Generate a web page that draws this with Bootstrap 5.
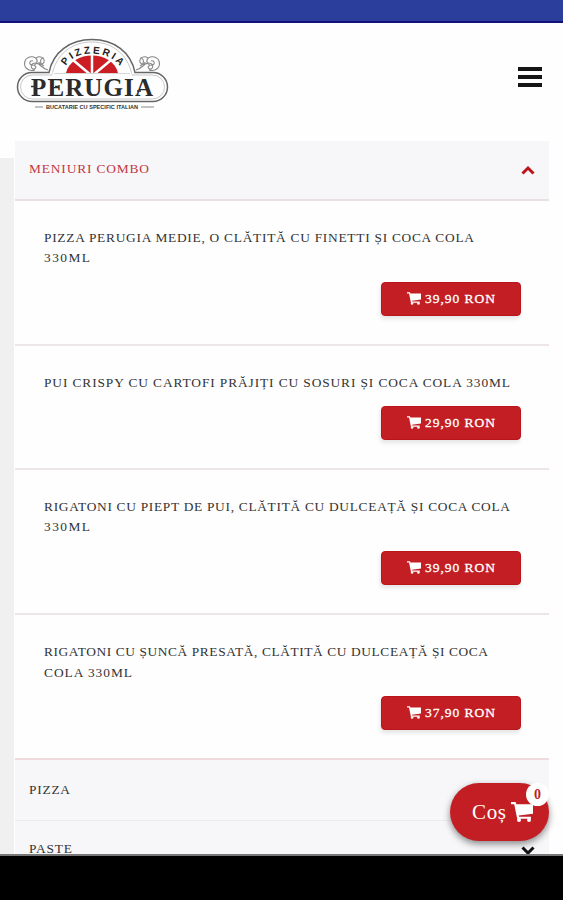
<!DOCTYPE html>
<html lang="ro">
<head>
<meta charset="utf-8">
<meta name="viewport" content="width=device-width, initial-scale=1">
<title>Pizzeria Perugia</title>
<link href="https://cdn.jsdelivr.net/npm/bootstrap@5.3.0/dist/css/bootstrap.min.css" rel="stylesheet">
<style>
body{font-family:"Liberation Serif",serif;background:#fefefe;color:#333}
.screen{height:900px}
.status{height:23px;background:#2c3e9c;border-bottom:2px solid #12127c}
.site-head{height:118px;padding:0 21px 0 15px}
.logo{width:156px;height:80px;margin-top:-15px}
.burger{width:24px;height:22px;margin-top:-11px}
.content{background:linear-gradient(#fefefe 17px,#f0f0f0 17px) 0 0/14px 100% no-repeat;padding:0 14px 0 15px}
.menu-list{background:#fefefe}
.cat{height:61px;background:#f7f7f9;border-bottom:1px solid #ececef;padding:0 14px 2px;font-size:13.4px;line-height:20px}
.cat.open{height:60px;color:#c13742;border-bottom:2px solid #ecdfe3;padding-bottom:4px}
.cat.cut{height:34px;border:0;padding:17px 14px 0}
.dish{height:145px;border-bottom:2px solid #eee5e7;padding:26px 28px 0 29px;font-size:13.4px;line-height:20.5px}
.dish.single{height:124px}
.dish.final{border-bottom-color:#efdade}
.dish>svg,.cat svg{display:block;overflow:visible}
.buy{width:140px;height:34px;margin-top:14px;background:#c21e23;color:#fff;border:1px solid #b9161b;border-radius:4px;font-size:13.5px;line-height:1;padding:0 0 1px;box-shadow:-1px 3px 4px rgba(0,0,0,.1)}
.buy:hover{background:#a9181c;color:#fff}
.cart-fab{right:14px;bottom:13px;width:99px;height:58px;background:#c21e23;color:#fff;border-radius:29px;font-size:21px;box-shadow:0 3px 7px rgba(0,0,0,.45);padding-left:6px}
.count{right:0;top:0;width:23px;height:23px;background:#fff;color:#c21e23;font-size:14px;font-weight:bold}
.sysbar{height:46px;background:#000;border-top:2px solid #777}
svg text{font-family:"Liberation Serif",serif}
svg .sans{font-family:"Liberation Sans",sans-serif}
</style>
<script src="https://cdn.jsdelivr.net/npm/bootstrap@5.3.0/dist/js/bootstrap.bundle.min.js"></script>
</head>
<body>
<svg class="d-none" aria-hidden="true">
  <symbol id="cart" viewBox="0 0 22 20"><path fill="currentColor" d="M0 0h4.600l.8 2.200H22v9.500L7.800 13.500l.3 1.300H20v2H6.200L3.200 2.200H0z"/><circle cx="8" cy="18" r="2" fill="currentColor"/><circle cx="18" cy="18" r="2" fill="currentColor"/></symbol>
</svg>
<div class="screen d-flex flex-column overflow-hidden">
  <div class="status flex-shrink-0"></div>
  <header class="site-head d-flex align-items-center justify-content-between flex-shrink-0">
    <svg class="logo" viewBox="15 35 156 80" aria-label="Pizzeria Perugia">
      <g fill="none">
        <path d="M49 72.500C53 52 70 39.500 92 39.500S131 52 135 72.500H153A14.500 14.500 0 0 1 153 101.500H32A14.500 14.500 0 0 1 32 72.500Z" stroke="#666" stroke-width="1.500"/>
        <path d="M52 75C56 54 72 42 92 42S128 54 132 75H152.500A12 12 0 0 1 152.500 99H32.500A12 12 0 0 1 32.500 75Z" stroke="#bbb" stroke-width=".8"/>
        <path d="M52.500 74H131.500" stroke="#fefefe" stroke-width="3"/>
        <g id="scroll" stroke="#888" stroke-width="1.100"><path d="M48 70c-6-1-7-6-12-7-5-.5-6 5-3 6 3 .7 4-3 1-3.500M35 70c-7 2-12-3-10-9 2-5 10-6 12-1 1 4-4 7-7 4-1-2 1-4 3-3M36 58c4-3 9 0 8 4-1 3-5 3-5 0M44 58c-4 0-5 6 0 8"/></g>
        <use href="#scroll" transform="matrix(-1 0 0 1 184 0)"/>
      </g>
      <path d="M66 73C71 49.500 113 49.500 118 73Z" fill="#cc1d25"/>
      <path d="M92 54v19M92 76L73 60M92 76L111 60" stroke="#fefefe" stroke-width="2.500"/>
      <path id="arc" d="M66 66C74 49 110 49 121 68" fill="none"/>
      <text class="sans" font-size="10" font-weight="bold" fill="#222"><textPath href="#arc" startOffset="0" textLength="62">PIZZERIA</textPath></text>
      <path d="M54 73.500h76" stroke="#ccc" stroke-width=".8"/>
      <text x="31" y="95.500" font-size="25" font-weight="bold" fill="#2b2b2b" textLength="122">PERUGIA</text>
      <path d="M31 86.500h4M55 86.500h4M76 86.500h4M137 91h4" stroke="#333" stroke-width="1.500"/>
      <text class="sans" x="46" y="109.300" font-size="5.600" font-weight="bold" fill="#333" textLength="92" lengthAdjust="spacingAndGlyphs">BUCATARIE CU SPECIFIC ITALIAN</text>
      <path d="M35 107h8M141 107h13" stroke="#888"/>
    </svg>
    <svg class="burger" viewBox="0 0 24 22" role="button" aria-label="Meniu"><path d="M0 3h24M0 11h24M0 19h24" stroke="#151515" stroke-width="4"/></svg>
  </header>
  <main class="content flex-grow-1 overflow-hidden position-relative">
    <div class="menu-list">
      <div class="cat open d-flex align-items-center justify-content-between">
        <svg width="120" height="20" fill="currentColor"><text y="14.500" textLength="120">MENIURI COMBO</text></svg>
        <svg class="mt-1" width="14" height="9" viewBox="0 0 14 9"><path d="M1.500 7.500 7 2l5.500 5.500" fill="none" stroke="#b9161b" stroke-width="3"/></svg>
      </div>
      <div class="dish">
        <svg width="431" height="41" fill="currentColor"><text y="14.500" textLength="430">PIZZA PERUGIA MEDIE, O CLĂTITĂ CU FINETTI ȘI COCA COLA</text><text y="35" textLength="46">330ML</text></svg>
        <button class="buy btn d-flex align-items-center justify-content-center gap-1 ms-auto"><svg width="14" height="13"><use href="#cart"/></svg><svg width="71" height="16" fill="currentColor"><text y="12" textLength="70" stroke="currentColor" stroke-width=".3">39,90 RON</text></svg></button>
      </div>
      <div class="dish single">
        <svg width="466" height="20" fill="currentColor"><text y="14.500" textLength="466">PUI CRISPY CU CARTOFI PRĂJIȚI CU SOSURI ȘI COCA COLA 330ML</text></svg>
        <button class="buy btn d-flex align-items-center justify-content-center gap-1 ms-auto"><svg width="14" height="13"><use href="#cart"/></svg><svg width="71" height="16" fill="currentColor"><text y="12" textLength="70" stroke="currentColor" stroke-width=".3">29,90 RON</text></svg></button>
      </div>
      <div class="dish">
        <svg width="466" height="41" fill="currentColor"><text y="14.500" textLength="466">RIGATONI CU PIEPT DE PUI, CLĂTITĂ CU DULCEAȚĂ ȘI COCA COLA</text><text y="35" textLength="46">330ML</text></svg>
        <button class="buy btn d-flex align-items-center justify-content-center gap-1 ms-auto"><svg width="14" height="13"><use href="#cart"/></svg><svg width="71" height="16" fill="currentColor"><text y="12" textLength="70" stroke="currentColor" stroke-width=".3">39,90 RON</text></svg></button>
      </div>
      <div class="dish final">
        <svg width="445" height="41" fill="currentColor"><text y="15" textLength="444">RIGATONI CU ȘUNCĂ PRESATĂ, CLĂTITĂ CU DULCEAȚĂ ȘI COCA</text><text y="35.500" textLength="88">COLA 330ML</text></svg>
        <button class="buy btn d-flex align-items-center justify-content-center gap-1 ms-auto"><svg width="14" height="13"><use href="#cart"/></svg><svg width="71" height="16" fill="currentColor"><text y="12" textLength="70" stroke="currentColor" stroke-width=".3">37,90 RON</text></svg></button>
      </div>
      <div class="cat d-flex align-items-center"><svg width="41" height="20" fill="currentColor"><text y="14.500" textLength="41">PIZZA</text></svg></div>
      <div class="cat cut d-flex align-items-start justify-content-between"><svg width="43" height="17" fill="currentColor"><text y="15" textLength="43">PASTE</text></svg>
        <svg class="mt-2" width="14" height="9" viewBox="0 0 14 9"><path d="M1.500 1.500 7 7l5.500-5.500" fill="none" stroke="#111" stroke-width="3"/></svg>
      </div>
    </div>
    <div class="cart-fab position-absolute d-flex align-items-center justify-content-center gap-1" role="button">
      <svg width="35" height="30" fill="currentColor"><text y="22" textLength="34">Coș</text></svg><svg width="22" height="20"><use href="#cart"/></svg>
      <span class="count position-absolute rounded-circle d-flex align-items-center justify-content-center">0</span>
    </div>
  </main>
  <div class="sysbar flex-shrink-0"></div>
</div>
</body>
</html>
